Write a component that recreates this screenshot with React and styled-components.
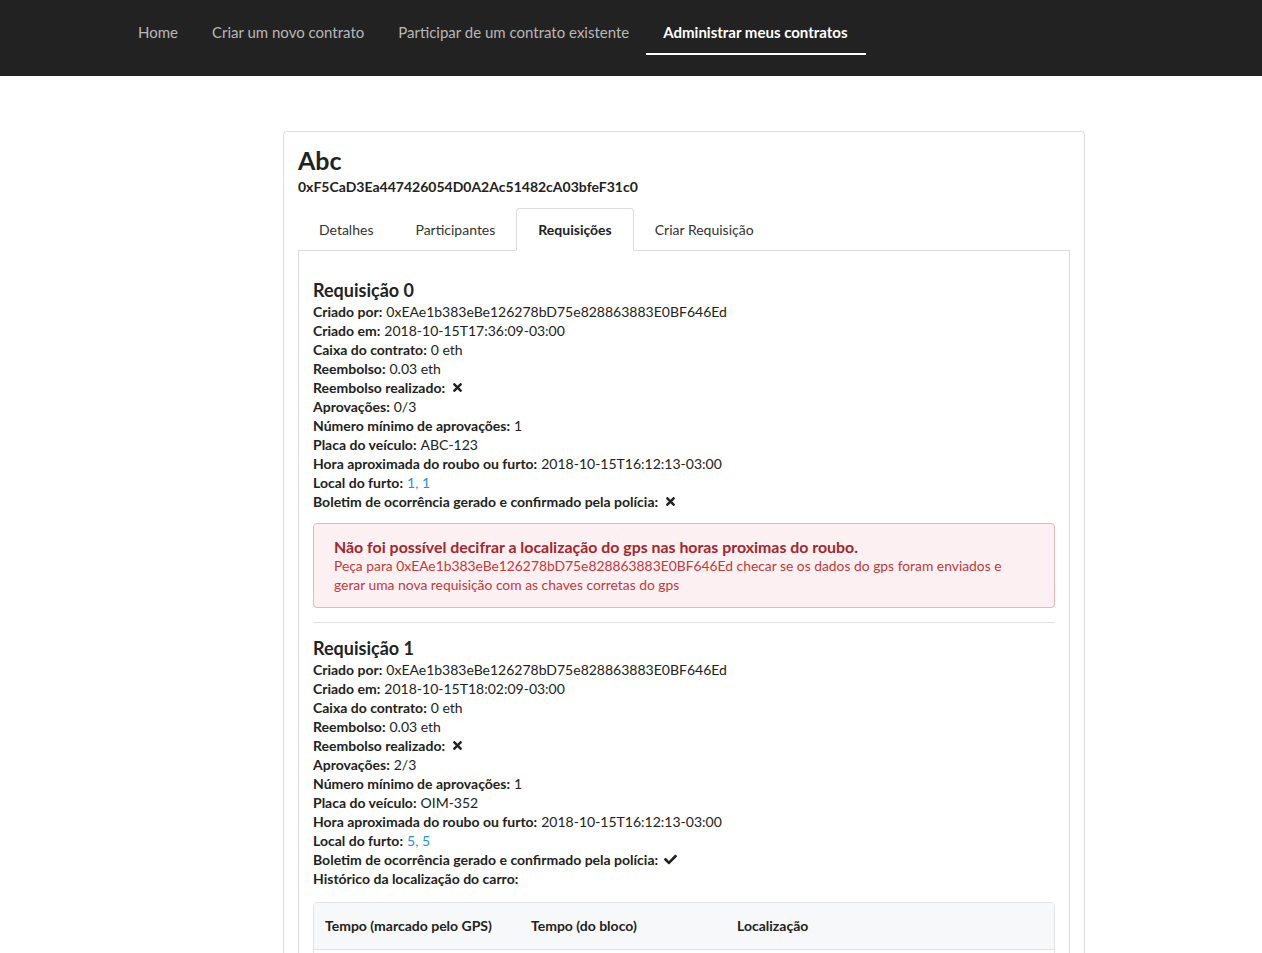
import React from 'react';
import styled, {createGlobalStyle, css} from 'styled-components';
import { FaTimes, FaCheck } from 'react-icons/fa';

const GlobalStyle = createGlobalStyle`
  body {
    margin: 0;
    background: #fff;
    font-family: Lato, "Noto Sans", sans-serif;
    font-size: 14px;
    line-height: 19px;
    color: #222;
  }
`

const Navbar = styled.nav`
    background-color: #222222;
    height: 76px;
    display: flex;
    align-items: flex-start;
    padding-left: 121px;
`

const NavItem = styled.a`
    display: block;
    padding: 23px 17px 0;
    font-size: 15px;
    line-height: 18px;
    color: #b8b8b8;
    text-decoration: none;
    ${props => props.active && css`
        color: #fff;
        font-weight: 700;
        & > span {
            position: relative;
            display: inline-block;
        }
        & > span::after {
            content: '';
            position: absolute;
            left: -17px;
            right: -18px;
            bottom: -14px;
            height: 2px;
            background: #fff;
        }
    `}
`

const Card = styled.section`
    width: 772px;
    margin: 55px 0 0 283px;
    border: 1px solid #ddd;
    border-radius: 4px;
    padding: 14px 14px 40px;
`

const Title = styled.h3`
    margin: 0;
    font-size: 25px;
    line-height: 29px;
    font-weight: 700;
    color: #222;
`

const Address = styled.div`
    margin-top: 2px;
    font-weight: 700;
`

const TabList = styled.div`
    display: flex;
    margin-top: 12px;
    border-bottom: 1px solid #ddd;
`

const Tab = styled.div`
    padding: 11px 20px 10px;
    line-height: 20px;
    border: 1px solid transparent;
    border-radius: 4px 4px 0 0;
    margin-bottom: -1px;
    color: #333;
    ${props => props.active && css`
        padding: 11px 21px 10px;
        border-color: #ddd;
        border-bottom-color: #fff;
        background: #fff;
        font-weight: 700;
        color: #222;
    `}
`

const Panel = styled.div`
    border: 1px solid #ddd;
    border-top: none;
    padding: 28px 14px 0;
`

const ReqTitle = styled.h4`
    margin: 0 0 1px;
    font-size: 18px;
    line-height: 22px;
    font-weight: 700;
    color: #222;
`

const Line = styled.div`
    display: flex;
    align-items: center;
    gap: 4px;
    white-space: nowrap;
`

const Label = styled.b`
    font-weight: 700;
`

const Link = styled.a`
    color: #2a8fd9;
    text-decoration: none;
`

const Mark = styled.span`
    display: inline-flex;
    margin-left: 2px;
    font-size: 13px;
`

const Alert = styled.div`
    margin-top: 12px;
    background: #fdf0f2;
    border: 1px solid #efb3bb;
    border-radius: 4px;
    padding: 13px 20px 13px;
    font-size: 13.85px;
    color: #c23b3b;
`

const AlertTitle = styled.div`
    font-size: 15.9px;
    font-weight: 700;
    color: #a3272d;
`

const Divider = styled.hr`
    border: none;
    border-top: 1px solid #e2e2e2;
    margin: 14px 0;
`

const Table = styled.div`
    margin-top: 14px;
    border: 1px solid #e3e3e3;
    border-radius: 4px;
`

const TableRow = styled.div`
    display: grid;
    grid-template-columns: 206px 206px 206px 1fr;
    padding: 0 11px;
    min-height: 46px;
    ${props => props.head && css`
        background: #f7f8f9;
        font-weight: 700;
        border-bottom: 1px solid #e3e3e3;
    `}
`

const Cell = styled.div`
    padding: 13px 0 14px;
`

const No = () => <Mark><FaTimes/></Mark>
const Yes = () => <Mark><FaCheck/></Mark>

function Field({label, children}) {
    return (
        <Line>
            <Label>{label}:</Label>
            <span>{children}</span>
        </Line>
    )
}

function Requisicao({n, date, approvals, plate, local, report, children}) {
    return (
        <div>
            <ReqTitle>Requisição {n}</ReqTitle>
            <Field label="Criado por">0xEAe1b383eBe126278bD75e828863883E0BF646Ed</Field>
            <Field label="Criado em">{date}</Field>
            <Field label="Caixa do contrato">0 eth</Field>
            <Field label="Reembolso">0.03 eth</Field>
            <Line><Label>Reembolso realizado:</Label> <No/></Line>
            <Field label="Aprovações">{approvals}</Field>
            <Field label="Número mínimo de aprovações">1</Field>
            <Field label="Placa do veículo">{plate}</Field>
            <Field label="Hora aproximada do roubo ou furto">2018-10-15T16:12:13-03:00</Field>
            <Field label="Local do furto"><Link href="#">{local}</Link></Field>
            <Line><Label>Boletim de ocorrência gerado e confirmado pela polícia:</Label> {report ? <Yes/> : <No/>}</Line>
            {children}
        </div>
    )
}

function App() {
    return (
        <>
            <GlobalStyle/>
            <Navbar>
                <NavItem href="#">Home</NavItem>
                <NavItem href="#">Criar um novo contrato</NavItem>
                <NavItem href="#">Participar de um contrato existente</NavItem>
                <NavItem href="#" active><span>Administrar meus contratos</span></NavItem>
            </Navbar>
            <Card>
                <Title>Abc</Title>
                <Address>0xF5CaD3Ea447426054D0A2Ac51482cA03bfeF31c0</Address>
                <TabList>
                    <Tab>Detalhes</Tab>
                    <Tab>Participantes</Tab>
                    <Tab active>Requisições</Tab>
                    <Tab>Criar Requisição</Tab>
                </TabList>
                <Panel>
                    <Requisicao n={0} date="2018-10-15T17:36:09-03:00" approvals="0/3" plate="ABC-123" local="1, 1">
                        <Alert>
                            <AlertTitle>Não foi possível decifrar a localização do gps nas horas proximas do roubo.</AlertTitle>
                            Peça para 0xEAe1b383eBe126278bD75e828863883E0BF646Ed checar se os dados do gps foram enviados e gerar uma nova requisição com as chaves corretas do gps
                        </Alert>
                    </Requisicao>
                    <Divider/>
                    <Requisicao n={1} date="2018-10-15T18:02:09-03:00" approvals="2/3" plate="OIM-352" local="5, 5" report>
                        <Line><Label>Histórico da localização do carro:</Label></Line>
                        <Table>
                            <TableRow head>
                                <Cell>Tempo (marcado pelo GPS)</Cell>
                                <Cell>Tempo (do bloco)</Cell>
                                <Cell>Localização</Cell>
                                <Cell/>
                            </TableRow>
                            <TableRow/>
                        </Table>
                    </Requisicao>
                    <Divider/>
                </Panel>
            </Card>
        </>
    );
}

export default App;
